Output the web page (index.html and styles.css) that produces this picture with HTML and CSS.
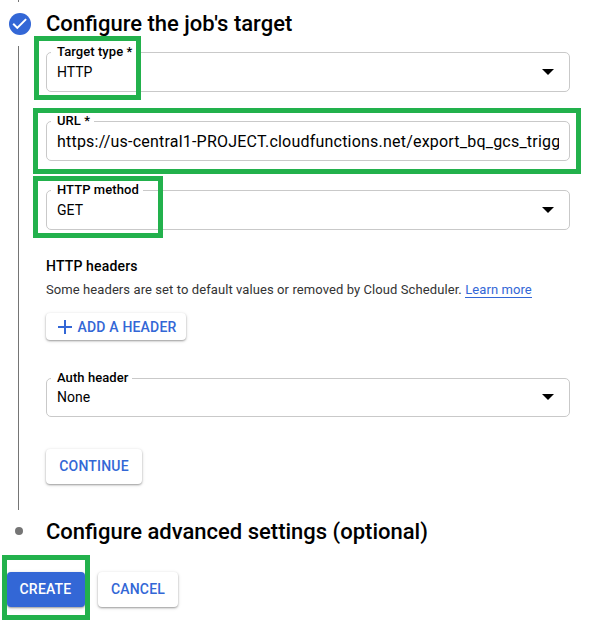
FILE: index.html
```html
<!DOCTYPE html>
<html lang="en">
<head>
<meta charset="utf-8">
<title>Create a job</title>
<link rel="stylesheet" href="styles.css">
</head>
<body>
<main class="page">
  <section class="step">
    <div class="rail">
      <span class="rail-top"></span>
      <svg class="check" viewBox="0 0 22 22"><circle cx="11" cy="11" r="11"/><path d="M4.2 10.8 8.3 14.9 17.1 6.1"/></svg>
      <span class="rail-line"></span>
    </div>
    <div class="content">
      <h2 class="title title-target"><span>Configure the job's target</span></h2>
      <div class="field">
        <span class="label label-type">Target type *</span>
        <span class="value">HTTP</span>
        <svg class="arrow" viewBox="0 0 12 6"><path d="M0 0h12L6 6z"/></svg>
        <span class="mark mark-type"></span>
      </div>
      <div class="field">
        <span class="label label-url">URL *</span>
        <span class="value value-url">https://us-central1-PROJECT.cloudfunctions.net/export_bq_gcs_trigg</span>
        <span class="mark mark-url"></span>
      </div>
      <div class="field">
        <span class="label label-method">HTTP method</span>
        <span class="value">GET</span>
        <svg class="arrow" viewBox="0 0 12 6"><path d="M0 0h12L6 6z"/></svg>
        <span class="mark mark-method"></span>
      </div>
      <h3 class="subtitle"><span>HTTP headers</span></h3>
      <p class="hint"><span>Some headers are set to default values or removed by Cloud Scheduler.</span> <a class="link">Learn more</a></p>
      <button class="btn btn-add"><svg class="plus" viewBox="0 0 14 14"><path d="M7 0v14M0 7h14"/></svg><span>ADD A HEADER</span></button>
      <div class="field field-auth">
        <span class="label label-auth">Auth header</span>
        <span class="value">None</span>
        <svg class="arrow" viewBox="0 0 12 6"><path d="M0 0h12L6 6z"/></svg>
      </div>
      <button class="btn btn-continue"><span>CONTINUE</span></button>
    </div>
  </section>
  <section class="step step-next">
    <div class="rail"><span class="dot"></span></div>
    <h2 class="title title-advanced"><span>Configure advanced settings (optional)</span></h2>
  </section>
  <footer class="actions">
    <div class="create-wrap">
      <button class="btn btn-create"><span>CREATE</span></button>
      <span class="mark mark-create"></span>
    </div>
    <button class="btn btn-cancel"><span>CANCEL</span></button>
  </footer>
</main>
</body>
</html>
```
FILE: styles.css
```css
* { box-sizing: border-box; }
body {
  margin: 0;
  background: #fff;
  color: #000;
  font-family: Roboto, "Liberation Sans", sans-serif;
}
.page { width: 609px; height: 622px; overflow: hidden; }
.step { display: grid; grid-template-columns: 46px 524px; height: 510px; }
.step-next { height: 45px; align-items: center; }
.rail { display: flex; flex-direction: column; align-items: flex-start; height: 100%; }
.rail-top { width: 1px; height: 2px; margin: 0 0 11px 18px; background: #757575; }
.rail-line { width: 1px; flex: 1; margin: 11px 0 0 18px; background: #757575; }
.check { width: 22px; height: 22px; margin-left: 9px; fill: #3367d6; }
.check path { fill: none; stroke: #fff; stroke-width: 2; }
.dot { width: 8px; height: 8px; margin: 17px 0 0 15px; border-radius: 50%; background: #757575; }
.content { display: flex; flex-direction: column; align-items: flex-start; min-width: 0; }
.title { margin: 0; font-size: 22px; font-weight: 500; line-height: 28px; white-space: nowrap; }
.title-target { padding-top: 10px; height: 52px; }
.title-advanced { padding-bottom: 2px; }
.field {
  position: relative;
  display: flex;
  align-items: center;
  width: 524px;
  height: 40px;
  margin-bottom: 29px;
  padding: 0 10px;
  border: 1px solid #c9c9c9;
  border-radius: 5px;
}
.label {
  position: absolute;
  top: -9px;
  left: 4px;
  padding: 0 4px 0 6px;
  background: #fff;
  font-size: 13px;
  font-weight: 500;
  letter-spacing: .07px;
  line-height: 16px;
  white-space: nowrap;
}
.value { flex: 1; overflow: hidden; font-size: 14px; line-height: 20px; white-space: nowrap; }
.value-url { padding-top: 2px; font-size: 16px; letter-spacing: .21px; }
.arrow { width: 12px; height: 6px; margin-right: 5px; }
.mark { position: absolute; border: 5px solid #22b14c; pointer-events: none; }
.mark-type { left: -13px; top: -17px; width: 107px; height: 64px; }
.mark-url { left: -14px; top: -14px; width: 548px; height: 66px; }
.mark-method { left: -14px; top: -15px; width: 130px; height: 62px; }
.mark-create { left: -5px; top: -17px; width: 88px; height: 65px; }
.subtitle { margin: -2px 0 0; font-size: 14px; font-weight: 500; letter-spacing: .16px; line-height: 18px; }
.hint { margin: 7px 0 0; height: 17px; font-size: 13px; letter-spacing: .087px; line-height: 16px; color: #333; white-space: nowrap; }
.link { display: inline-block; line-height: 15px; color: #3367d6; border-bottom: 1px solid #3367d6; }
.btn {
  display: flex;
  align-items: center;
  justify-content: center;
  padding: 0;
  border: 0;
  border-radius: 4px;
  background: #fff;
  color: #3367d6;
  font: 500 14px/20px Roboto, "Liberation Sans", sans-serif;
  letter-spacing: .18px;
  white-space: nowrap;
  box-shadow: 0 1px 2px rgba(0,0,0,.34), 0 1px 4px rgba(0,0,0,.1);
}
.btn-add { width: 140px; height: 27px; margin-top: 14px; padding-left: 2px; gap: 6px; }
.plus { width: 14px; height: 14px; fill: none; stroke: #3367d6; stroke-width: 2; }
.field-auth { height: 39px; margin: 38px 0 32px; padding-bottom: 1px; }
.btn-continue { width: 96px; height: 35px; padding-bottom: 1px; }
.actions { display: flex; gap: 13px; padding: 17px 0 0 7px; }
.create-wrap { position: relative; }
.btn-create { width: 78px; height: 35px; padding: 0 1px 1px 0; background: #3367d6; color: #fff; letter-spacing: .2px; }
.btn-cancel { width: 80px; height: 35px; padding-bottom: 1px; }
```
